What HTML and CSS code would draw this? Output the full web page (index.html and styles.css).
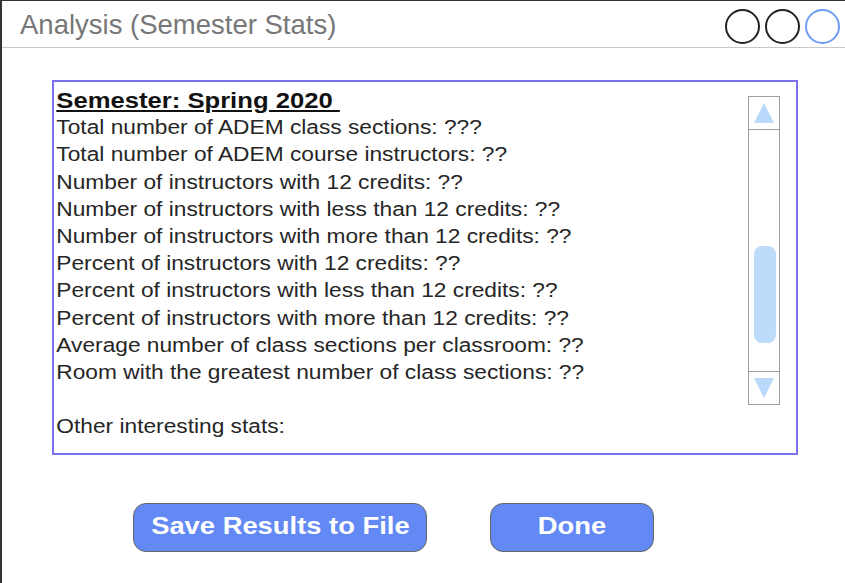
FILE: index.html
```html
<!DOCTYPE html>
<html>
<head>
<meta charset="utf-8">
<link rel="stylesheet" href="styles.css">
</head>
<body>
<div class="frame">
  <div class="titlebar">
    <div class="title">Analysis (Semester Stats)</div>
    <div class="circles">
      <span class="circle"></span>
      <span class="circle"></span>
      <span class="circle blue"></span>
    </div>
  </div>
  <div class="panel">
    <div class="text">
      <div class="heading">Semester: Spring 2020 </div>
      <div>Total number of ADEM class sections: ???</div>
      <div>Total number of ADEM course instructors: ??</div>
      <div>Number of instructors with 12 credits: ??</div>
      <div>Number of instructors with less than 12 credits: ??</div>
      <div>Number of instructors with more than 12 credits: ??</div>
      <div>Percent of instructors with 12 credits: ??</div>
      <div>Percent of instructors with less than 12 credits: ??</div>
      <div>Percent of instructors with more than 12 credits: ??</div>
      <div>Average number of class sections per classroom: ??</div>
      <div>Room with the greatest number of class sections: ??</div>
      <div class="blank">&nbsp;</div>
      <div>Other interesting stats:</div>
    </div>
    <div class="scrollbar">
      <div class="sbtn up"><span class="tri-up"></span></div>
      <div class="track"><div class="thumb"></div></div>
      <div class="sbtn down"><span class="tri-down"></span></div>
    </div>
  </div>
  <div class="buttons">
    <button class="btn save"><span class="label">Save Results to File</span></button>
    <button class="btn done"><span class="label">Done</span></button>
  </div>
</div>
</body>
</html>
```
FILE: styles.css
```css
html, body {
  margin: 0;
  padding: 0;
  background: #fff;
}
.frame {
  width: 843px;
  height: 582px;
  border-left: 2px solid #333;
  border-top: 1px solid #333;
  font-family: "Liberation Sans", Arial, sans-serif;
  overflow: hidden;
}
.titlebar {
  height: 46px;
  border-bottom: 1px solid #c8c8c8;
  display: flex;
  align-items: center;
  justify-content: space-between;
}
.title {
  color: #777;
  font-size: 27.5px;
  padding-left: 18px;
  padding-top: 2px;
}
.circles {
  display: flex;
  gap: 5px;
  padding-right: 5px;
  padding-top: 4px;
}
.circle {
  width: 31px;
  height: 31px;
  border: 2px solid #222;
  border-radius: 50%;
  display: block;
}
.circle.blue {
  border-color: #6d9cf7;
}
.panel {
  margin-top: 32px;
  margin-left: 50px;
  width: 742px;
  height: 371px;
  border: 2px solid #7a70f0;
  display: flex;
  justify-content: space-between;
}
.text {
  padding-left: 2px;
  padding-top: 5px;
  font-size: 19.5px;
  line-height: 27.2px;
  color: #262626;
  white-space: nowrap;
  transform: scaleX(1.165);
  transform-origin: left top;
}
.heading {
  font-weight: bold;
  font-size: 22px;
  text-decoration: underline;
  color: #111;
  white-space: pre;
}
.scrollbar {
  margin-top: 14px;
  margin-right: 16px;
  width: 30px;
  height: 307px;
  border: 1px solid #a0a0a0;
  display: flex;
  flex-direction: column;
}
.sbtn {
  height: 32px;
  display: flex;
  align-items: center;
  justify-content: center;
}
.sbtn.up {
  border-bottom: 1px solid #a0a0a0;
}
.sbtn.down {
  border-top: 1px solid #a0a0a0;
}
.tri-up {
  width: 0;
  height: 0;
  border-left: 10px solid transparent;
  border-right: 10px solid transparent;
  border-bottom: 20px solid #b9d9fa;
}
.tri-down {
  width: 0;
  height: 0;
  border-left: 10px solid transparent;
  border-right: 10px solid transparent;
  border-top: 20px solid #b9d9fa;
}
.track {
  flex: 1;
  position: relative;
}
.thumb {
  position: absolute;
  left: 5px;
  top: 116px;
  width: 22px;
  height: 97px;
  border-radius: 8px;
  background: #bcdcfa;
}
.buttons {
  margin-top: 48px;
  padding-left: 131px;
  display: flex;
  gap: 63px;
}
.btn {
  height: 49px;
  border: 1px solid #666;
  border-radius: 13px;
  background: #6389f5;
  color: #fff;
  font-family: "Liberation Sans", Arial, sans-serif;
  font-weight: bold;
  font-size: 24px;
  padding: 0;
  padding-bottom: 4px;
}
.label {
  display: inline-block;
  transform: scaleX(1.14);
}
.btn.save {
  width: 294px;
}
.btn.done {
  width: 164px;
}
```
